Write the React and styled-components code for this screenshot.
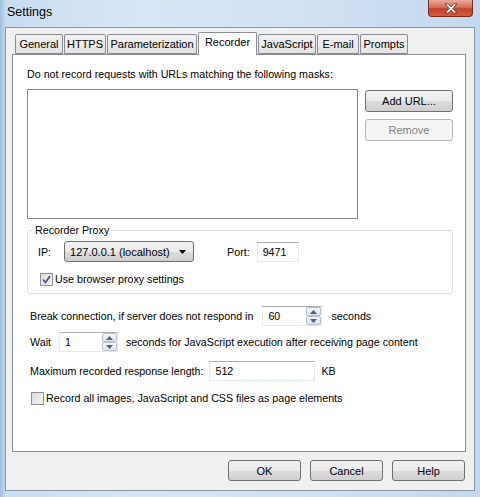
import React from 'react';
import styled, { createGlobalStyle } from 'styled-components';

const GlobalStyle = createGlobalStyle`
  body {
    margin: 0;
    font-family: "Liberation Sans", Arial, sans-serif;
    font-size: 10.7px;
    color: #000;
  }
`;

const tabs = [
  { name: 'General', width: 48 },
  { name: 'HTTPS', width: 42 },
  { name: 'Parameterization', width: 90 },
  { name: 'Recorder', width: 59, active: true },
  { name: 'JavaScript', width: 58 },
  { name: 'E-mail', width: 42 },
  { name: 'Prompts', width: 48 },
];

const Window = styled.div`
  width: 480px;
  height: 497px;
  display: flex;
  flex-direction: column;
  box-sizing: border-box;
  background: linear-gradient(to right, #9fbfe0 0px, #c9ddf1 6px, #d7e6f5 30%, #cfe0f2 70%, #c3d8ee 100%);
`;

const TitleBar = styled.div`
  height: 27px;
  flex: none;
  display: flex;
  align-items: flex-start;
  padding-left: 7px;
`;

const Title = styled.div`
  margin-top: 5px;
  font-size: 12.5px;
  line-height: 15px;
`;

const CloseButton = styled.div`
  margin-left: auto;
  margin-right: 7px;
  width: 45px;
  height: 17px;
  box-sizing: border-box;
  border: 1px solid #7a2a1c;
  border-top: none;
  border-radius: 0 0 4px 4px;
  background: linear-gradient(to bottom, #e9a99a 0%, #d7705a 45%, #c5412a 55%, #d55d3f 100%);
  display: flex;
  align-items: center;
  justify-content: center;
`;

const Client = styled.div`
  flex: 1;
  margin: 0 5px 6px 5px;
  border: 1px solid #8b97a5;
  background: #f0f0f0;
  padding: 4px 9px 9px 6px;
  display: flex;
  flex-direction: column;
`;

const TabStrip = styled.div`
  position: relative;
  z-index: 1;
  display: flex;
  align-items: flex-end;
  height: 23px;
  margin-bottom: -1px;
  padding-left: 3px;
  gap: 1px;
`;

const Tab = styled.div`
  width: ${(p) => p.$width}px;
  box-sizing: border-box;
  height: ${(p) => (p.$active ? 23 : 20)}px;
  margin-bottom: ${(p) => (p.$active ? 0 : 1)}px;
  border: 1px solid #898c95;
  border-bottom: ${(p) => (p.$active ? 'none' : '1px solid #898c95')};
  border-radius: 2px 2px 0 0;
  background: ${(p) => (p.$active ? '#fff' : 'linear-gradient(to bottom, #f2f2f2, #e3e3e3)')};
  display: flex;
  justify-content: center;
  padding-top: 3px;
  font-size: 11px;
  line-height: 13px;
  white-space: nowrap;
`;

const Panel = styled.div`
  width: 454px;
  height: 398px;
  box-sizing: border-box;
  background: #fff;
  border: 1px solid #898c95;
  padding: 12px 12px 0 14px;
  display: flex;
  flex-direction: column;
`;

const Label = styled.div`
  line-height: 14px;
  white-space: nowrap;
`;

const ListRow = styled.div`
  margin-top: 8px;
  display: flex;
  gap: 7px;
`;

const ListBox = styled.div`
  width: 331px;
  height: 130px;
  box-sizing: border-box;
  border: 1px solid #828790;
  background: #fff;
`;

const ButtonColumn = styled.div`
  margin-top: 1px;
  display: flex;
  flex-direction: column;
  gap: 7px;
`;

const Button = styled.div`
  width: ${(p) => p.$width}px;
  height: ${(p) => p.$height || 21}px;
  box-sizing: border-box;
  border: 1px solid ${(p) => (p.$disabled ? '#b5b8bb' : '#707070')};
  border-radius: 3px;
  background: ${(p) =>
    p.$disabled
      ? '#f4f4f4'
      : 'linear-gradient(to bottom, #f2f2f2 0%, #ebebeb 50%, #dddddd 51%, #cfcfcf 100%)'};
  color: ${(p) => (p.$disabled ? '#838383' : '#000')};
  display: flex;
  align-items: center;
  justify-content: center;
  font-size: 11px;
  white-space: nowrap;
`;

const Group = styled.fieldset`
  margin: 4px 0 0 0;
  width: 426px;
  box-sizing: border-box;
  border: 1px solid #d5dfe5;
  border-radius: 3px;
  padding: 4px 10px 7px 10px;
`;

const Legend = styled.legend`
  margin-left: -5px;
  padding: 0 2px;
  line-height: 14px;
`;

const Row = styled.div`
  display: flex;
  align-items: center;
  height: ${(p) => p.$height ?? 20}px;
  margin-top: ${(p) => p.$top ?? 0}px;
  padding-left: ${(p) => p.$indent ?? 0}px;
  gap: ${(p) => p.$gap ?? 6}px;
  white-space: nowrap;
`;

const Combo = styled.div`
  margin-left: 13px;
  width: 130px;
  height: 21px;
  box-sizing: border-box;
  border: 1px solid #707070;
  border-radius: 3px;
  background: linear-gradient(to bottom, #f2f2f2 0%, #ebebeb 50%, #dddddd 51%, #cfcfcf 100%);
  display: flex;
  align-items: center;
  padding: 0 7px 0 5px;
  font-size: 11px;
`;

const ComboText = styled.span`
  flex: 1;
`;

const FieldLabel = styled.span`
  margin-left: ${(p) => p.$left ?? 0}px;
`;

const TextBox = styled.div`
  width: ${(p) => p.$width}px;
  height: 20px;
  box-sizing: border-box;
  border: 1px solid #e3e9ef;
  border-top-color: #abadb3;
  background: #fff;
  display: flex;
  align-items: center;
  padding-left: 5px;
  margin-left: ${(p) => p.$left ?? 0}px;
`;

const SpinBox = styled.div`
  width: ${(p) => p.$width}px;
  height: 20px;
  box-sizing: border-box;
  border: 1px solid #e3e9ef;
  border-top-color: #abadb3;
  background: #fff;
  display: flex;
  align-items: center;
  padding-left: 5px;
`;

const SpinValue = styled.span`
  flex: 1;
`;

const SpinButtons = styled.div`
  width: 15px;
  height: 18px;
  display: flex;
  flex-direction: column;
`;

const SpinHalf = styled.div`
  flex: 1;
  box-sizing: border-box;
  border: 1px solid #b6c2d0;
  border-radius: 2px;
  background: linear-gradient(to bottom, #f4f6f9, #dde4ec);
  display: flex;
  align-items: center;
  justify-content: center;
`;

const CheckRow = styled.div`
  display: flex;
  align-items: center;
  height: 14px;
  margin-top: ${(p) => p.$top ?? 0}px;
  padding-left: ${(p) => p.$indent ?? 0}px;
  gap: 1px;
  white-space: nowrap;
`;

const Box = styled.div`
  width: 13px;
  height: 13px;
  box-sizing: border-box;
  border: 1px solid #8f8f8f;
  background: linear-gradient(135deg, #dcdcdc, #f6f6f6);
  display: flex;
  align-items: center;
  justify-content: center;
  margin-right: 1px;
`;

const ButtonBar = styled.div`
  margin-top: 8px;
  display: flex;
  justify-content: flex-end;
  gap: 9px;
`;

const Triangle = ({ up }) => (
  <svg width="7" height="4" viewBox="0 0 7 4">
    <path d={up ? 'M0 4 L3.5 0 L7 4 Z' : 'M0 0 L3.5 4 L7 0 Z'} fill="#4d6185" />
  </svg>
);

const Spinner = ({ value, width }) => (
  <SpinBox $width={width}>
    <SpinValue>{value}</SpinValue>
    <SpinButtons>
      <SpinHalf>
        <Triangle up />
      </SpinHalf>
      <SpinHalf>
        <Triangle />
      </SpinHalf>
    </SpinButtons>
  </SpinBox>
);

const Checkbox = ({ checked }) => (
  <Box>
    {checked && (
      <svg width="9" height="9" viewBox="0 0 9 9">
        <path d="M1 4.5 L3.5 7.5 L8 1" fill="none" stroke="#4a5a85" strokeWidth="1.8" />
      </svg>
    )}
  </Box>
);

export default function App() {
  return (
    <>
      <GlobalStyle />
      <Window>
        <TitleBar>
          <Title>Settings</Title>
          <CloseButton>
            <svg width="14" height="11" viewBox="0 0 14 11">
              <path
                d="M1 1 H4.5 L7 3.8 L9.5 1 H13 L8.8 5.5 L13 10 H9.5 L7 7.2 L4.5 10 H1 L5.2 5.5 Z"
                fill="#fff"
                stroke="#5a2418"
                strokeWidth="0.8"
              />
            </svg>
          </CloseButton>
        </TitleBar>
        <Client>
          <TabStrip>
            {tabs.map((t) => (
              <Tab key={t.name} $width={t.width} $active={t.active}>
                {t.name}
              </Tab>
            ))}
          </TabStrip>
          <Panel>
            <Label>Do not record requests with URLs matching the following masks:</Label>
            <ListRow>
              <ListBox />
              <ButtonColumn>
                <Button $width={88} $height={22}>Add URL...</Button>
                <Button $width={88} $height={22} $disabled>Remove</Button>
              </ButtonColumn>
            </ListRow>
            <Group>
              <Legend>Recorder Proxy</Legend>
              <Row $height={21} $gap={0}>
                <span>IP:</span>
                <Combo>
                  <ComboText>127.0.0.1 (localhost)</ComboText>
                  <svg width="7" height="4" viewBox="0 0 7 4">
                    <path d="M0 0 L3.5 4 L7 0 Z" fill="#000" />
                  </svg>
                </Combo>
                <FieldLabel $left={33}>Port:</FieldLabel>
                <TextBox $width={42} $left={7}>9471</TextBox>
              </Row>
              <CheckRow $top={10} $indent={2}>
                <Checkbox checked />
                Use browser proxy settings
              </CheckRow>
            </Group>
            <Row $top={12} $indent={3} $gap={9}>
              <span>Break connection, if server does not respond in</span>
              <Spinner value="60" width={60} />
              <span>seconds</span>
            </Row>
            <Row $top={6} $indent={3} $gap={8}>
              <span>Wait</span>
              <Spinner value="1" width={59} />
              <span>seconds for JavaScript execution after receiving page content</span>
            </Row>
            <Row $top={9} $indent={3} $gap={6}>
              <span>Maximum recorded response length:</span>
              <TextBox $width={106}>512</TextBox>
              <span>KB</span>
            </Row>
            <CheckRow $top={10} $indent={4}>
              <Checkbox />
              Record all images, JavaScript and CSS files as page elements
            </CheckRow>
          </Panel>
          <ButtonBar>
            <Button $width={73}>OK</Button>
            <Button $width={73}>Cancel</Button>
            <Button $width={73}>Help</Button>
          </ButtonBar>
        </Client>
      </Window>
    </>
  );
}
